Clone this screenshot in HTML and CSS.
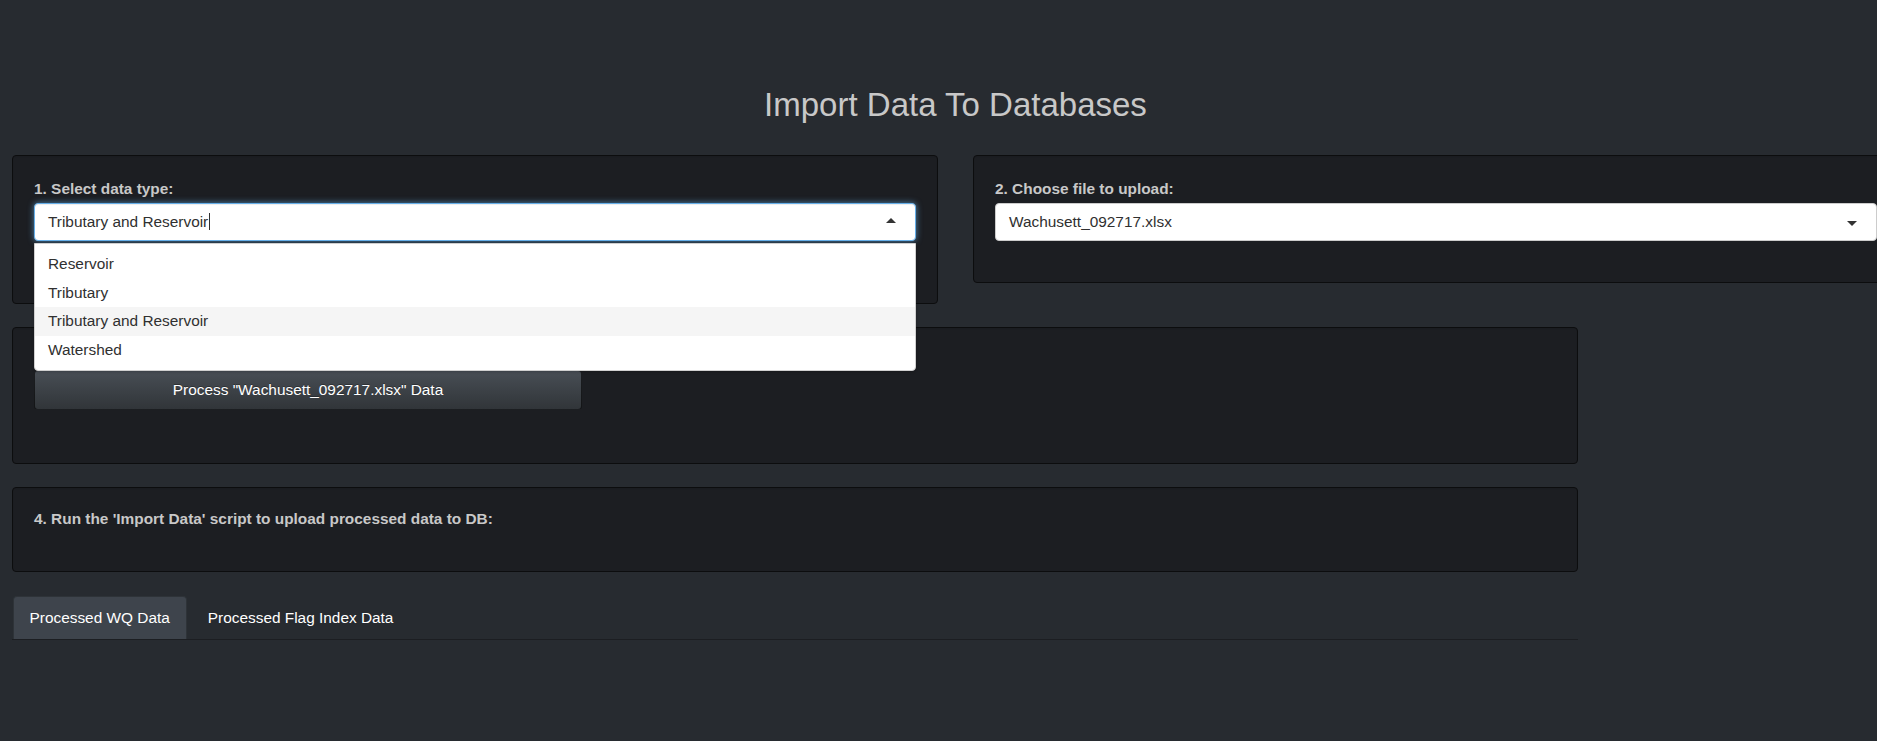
FILE: index.html
```html
<!DOCTYPE html>
<html lang="en">
<head>
<meta charset="utf-8">
<title>Import Data To Databases</title>
<link rel="stylesheet" href="styles.css">
</head>
<body>
<div class="page">
  <h2 class="title">Import Data To Databases</h2>

  <div class="row-top">
    <div class="well well-1">
      <div class="label">1. Select data type:</div>
      <div class="select-wrap">
        <div class="select focus">
          <span class="value">Tributary and Reservoir</span><span class="cursor"></span>
          <span class="caret up"></span>
        </div>
        <div class="dropdown">
          <div class="option">Reservoir</div>
          <div class="option">Tributary</div>
          <div class="option active">Tributary and Reservoir</div>
          <div class="option">Watershed</div>
        </div>
      </div>
    </div>
    <div class="well well-2">
      <div class="label">2. Choose file to upload:</div>
      <div class="select">
        <span class="value">Wachusett_092717.xlsx</span>
        <span class="caret"></span>
      </div>
    </div>
  </div>

  <div class="well well-3">
    <button class="btn">Process "Wachusett_092717.xlsx" Data</button>
  </div>

  <div class="well well-4">
    <div class="label">4. Run the 'Import Data' script to upload processed data to DB:</div>
  </div>

  <ul class="tabs">
    <li class="tab active">Processed WQ Data</li>
    <li class="tab">Processed Flag Index Data</li>
  </ul>
</div>
</body>
</html>
```

FILE: styles.css
```css
* { box-sizing: border-box; }
html, body {
  margin: 0;
  padding: 0;
  background: #272b30;
  overflow: hidden;
}
body {
  width: 1877px;
  height: 741px;
  font-family: "Liberation Sans", Arial, Helvetica, sans-serif;
  font-size: 15.4px;
  line-height: 20px;
  color: #c8c8c8;
}
.page {
  width: 1911px;
  padding-top: 87px;
}
.title {
  margin: 0 0 32px 0;
  font-size: 33px;
  line-height: 36px;
  font-weight: normal;
  text-align: center;
  color: #c8c8c8;
}
.row-top {
  display: flex;
  align-items: flex-start;
  gap: 35px;
  margin-left: 12px;
  margin-bottom: 23px;
}
.well {
  background: #1c1e22;
  border: 1px solid #0c0d0e;
  border-radius: 4px;
  box-shadow: inset 0 1px 1px rgba(0,0,0,0.05);
}
.well-1, .well-2 {
  width: 926px;
  padding: 23px 21px 0 21px;
}
.well-1 { height: 149px; }
.well-2 { height: 128px; }
.label {
  font-weight: bold;
  margin-bottom: 4px;
  white-space: nowrap;
}
.select-wrap { position: relative; }
.select {
  position: relative;
  height: 38px;
  width: 882px;
  background: #fff;
  border: 1px solid #cccccc;
  border-radius: 4px;
  padding: 8px 13px;
  color: #303030;
  white-space: nowrap;
}
.select.focus {
  border-color: #66afe9;
  box-shadow: inset 0 1px 1px rgba(0,0,0,0.075), 0 0 6px rgba(102,175,233,0.7);
}
.cursor {
  display: inline-block;
  width: 1px;
  height: 17px;
  background: #303030;
  vertical-align: -3px;
  margin-left: 1px;
}
.caret {
  position: absolute;
  right: 19px;
  top: 17px;
  width: 0;
  height: 0;
  border-style: solid;
  border-width: 5px 5px 0 5px;
  border-color: #333 transparent transparent transparent;
}
.caret.up {
  top: 14px;
  border-width: 0 5px 5px 5px;
  border-color: transparent transparent #333 transparent;
}
.dropdown {
  position: absolute;
  z-index: 10;
  left: 0;
  top: 40px;
  width: 882px;
  background: #fff;
  border: 1px solid #d0d0d0;
  border-radius: 0 0 4px 4px;
  box-shadow: 0 1px 3px rgba(0,0,0,0.2);
  padding: 6px 0 6px 0;
  color: #303030;
}
.option {
  padding: 4px 13px;
  line-height: 20.5px;
}
.option.active { background: #f5f5f5; }
.well-3 {
  margin-left: 12px;
  width: 1566px;
  height: 137px;
  padding: 42px 21px 0 21px;
  margin-bottom: 23px;
}
.btn {
  display: block;
  width: 548px;
  height: 40px;
  border: 1px solid rgba(0,0,0,0.6);
  border-radius: 4px;
  background: linear-gradient(#484e55, #3a3f44 60%, #313539);
  color: #ffffff;
  font-family: inherit;
  font-size: 15.4px;
  line-height: 20px;
  padding: 0;
  text-shadow: 0 -1px 0 rgba(0,0,0,0.3);
}
.well-4 {
  margin-left: 12px;
  width: 1566px;
  height: 85px;
  padding: 21px 21px 0 21px;
  margin-bottom: 24px;
}
.tabs {
  list-style: none;
  margin: 0 0 0 12px;
  padding: 0;
  width: 1566px;
  display: flex;
  border-bottom: 1px solid #1c1e22;
}
.tab {
  height: 43px;
  padding: 12px 16.5px 0 16.5px;
  margin-right: 4px;
  color: #ffffff;
  border-radius: 4px 4px 0 0;
  white-space: nowrap;
}
.tab.active {
  margin-left: 1px;
  background: #3e444c;
  border: 1px solid #2e3338;
  border-bottom: none;
  padding-top: 11px;
  padding-left: 15.5px;
}
```
